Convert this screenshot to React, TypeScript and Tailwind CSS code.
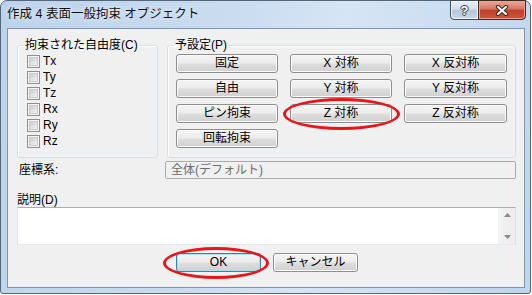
import React from 'react';

const btnBase =
  'h-[19px] rounded-[3px] border bg-[linear-gradient(#f4f4f4_0%,#ececec_48%,#dedede_52%,#d0d0d0_100%)] text-[12px] leading-[17px] text-black whitespace-nowrap';

function Btn({ label, isDefault = false }: { label: string; isDefault?: boolean }) {
  return (
    <button
      className={`${btnBase} ${
        isDefault
          ? 'border-[#3c7fb1] shadow-[inset_0_0_0_1px_#a6e1f7]'
          : 'border-[#8e8e8e] shadow-[inset_0_0_0_1px_#fbfbfb]'
      }`}
    >
      {label}
    </button>
  );
}

function CheckRow({ label }: { label: string }) {
  return (
    <div className="flex h-[16px] items-center gap-[3px]">
      <div className="h-[13px] w-[13px] border border-[#8e8f8f] bg-[#f4f4f4] p-[1px]">
        <div className="h-full w-full border border-[#c9c9c9] bg-[linear-gradient(135deg,#cfcfcf,#f2f2f2)]" />
      </div>
      <span className="leading-[14px]">{label}</span>
    </div>
  );
}

const presets = [
  '固定', 'X 対称', 'X 反対称',
  '自由', 'Y 対称', 'Y 反対称',
  'ピン拘束', 'Z 対称', 'Z 反対称',
  '回転拘束',
];

export default function App() {
  return (
    <div className="relative h-[295px] w-[532px] overflow-hidden bg-white font-['Liberation_Sans','Noto_Sans_CJK_JP',sans-serif] text-[12px] text-black">
      <div className="flex h-[294px] w-[531px] flex-col rounded-t-[7px] rounded-b-[3px] border border-[#55677b] bg-[linear-gradient(100deg,#bcd3eb_0%,#c9dcf0_40%,#d6e5f5_60%,#bed5ed_100%)]">
        {/* title bar */}
        <div className="flex h-[27px] shrink-0 items-start justify-between">
          <div className="pl-[6px] leading-[27px] text-[12.5px] text-[#111] [text-shadow:0_0_6px_#ffffff]">
            作成 4 表面一般拘束 オブジェクト
          </div>
          <div className="-mt-px mr-[4px] flex">
            <div className="flex h-[20px] w-[29px] items-center justify-center rounded-bl-[4px] border border-[#3d4d5f] bg-[linear-gradient(#e9f0f8_0%,#d3dfec_45%,#b5c7db_52%,#c9d7e7_100%)] shadow-[inset_0_0_0_1px_#f2f6fb]">
              <span className="text-[13px] font-bold leading-none text-white [text-shadow:1px_0_0_#3a3a3a,-1px_0_0_#3a3a3a,0_1px_0_#3a3a3a,0_-1px_0_#3a3a3a]">
                ?
              </span>
            </div>
            <div className="-ml-px flex h-[20px] w-[48px] items-center justify-center rounded-br-[4px] border border-[#3d2a28] bg-[linear-gradient(#e9a99b_0%,#d6735f_45%,#c23f2a_52%,#d3533d_100%)] shadow-[inset_0_0_0_1px_#eaa08f]">
              <svg width="14" height="11" viewBox="0 0 14 11">
                <path d="M3 2 L11 9 M11 2 L3 9" stroke="#3b2b2a" strokeWidth="4.2" strokeLinecap="round" />
                <path d="M3 2 L11 9 M11 2 L3 9" stroke="#ffffff" strokeWidth="2" strokeLinecap="round" />
              </svg>
            </div>
          </div>
        </div>

        {/* client area */}
        <div className="mb-[5px] ml-[6px] mr-[5px] flex flex-1 flex-col border border-[#7f96b0] bg-[#f0f0f0] pl-[9px] pr-[8px] pt-[9px]">
          <div className="flex gap-[9px]">
            <fieldset className="h-[120px] w-[141px] rounded-[3px] border border-[#d5dfe5] shadow-[inset_1px_1px_0_#ffffff]">
              <legend className="ml-[6px] px-[1px] leading-[14px]">拘束された自由度(C)</legend>
              <div className="mt-[1px] flex flex-col pl-[9px]">
                {['Tx', 'Ty', 'Tz', 'Rx', 'Ry', 'Rz'].map((l) => (
                  <CheckRow key={l} label={l} />
                ))}
              </div>
            </fieldset>
            <fieldset className="h-[120px] w-[349px] rounded-[3px] border border-[#d5dfe5] shadow-[inset_1px_1px_0_#ffffff]">
              <legend className="ml-[6px] px-[1px] leading-[14px]">予設定(P)</legend>
              <div className="mt-[2px] grid grid-cols-[102px_102px_103px] gap-x-[12px] gap-y-[6px] pl-[8px]">
                {presets.map((p) => (
                  <Btn key={p} label={p} />
                ))}
              </div>
            </fieldset>
          </div>

          <div className="mt-[3px] flex h-[18px] items-center">
            <span className="pl-[2px] leading-[14px]">座標系:</span>
            <div className="ml-auto flex h-[18px] w-[351px] items-center rounded-[2px] border border-[#a8abad] bg-[#f0f0f0] pl-[5px] text-[#6d6d6d]">
              全体(デフォルト)
            </div>
          </div>

          <div className="mt-[14px] h-[14px] leading-[14px]">説明(D)</div>

          <div className="flex h-[38px] border border-[#abadb3] border-b-[#e3e9ef] border-l-[#e2e3ea] border-r-[#dbdfe6] bg-white">
            <div className="flex-1" />
            <div className="flex w-[17px] flex-col items-center justify-between border-l border-[#f0f0f0] bg-[linear-gradient(90deg,#f3f3f3,#ececec)] py-[5px]">
              <svg width="7" height="4" viewBox="0 0 7 4">
                <path d="M0 4 L3.5 0 L7 4 Z" fill="#8a8a8a" />
              </svg>
              <svg width="7" height="4" viewBox="0 0 7 4">
                <path d="M0 0 L3.5 4 L7 0 Z" fill="#8a8a8a" />
              </svg>
            </div>
          </div>

          <div className="mt-[8px] flex gap-[12px] pl-[159px]">
            <div className="grid w-[85px]">
              <Btn label="OK" isDefault />
            </div>
            <div className="grid w-[85px]">
              <Btn label="キャンセル" />
            </div>
          </div>
        </div>
      </div>

      {/* red annotation rings */}
      <div className="absolute left-[283px] top-[98px] h-[32px] w-[117px] rounded-[50%] border-[3px] border-[#e8141a]" />
      <div className="absolute left-[163px] top-[247px] h-[32px] w-[106px] rounded-[50%] border-[3px] border-[#e8141a]" />
    </div>
  );
}
